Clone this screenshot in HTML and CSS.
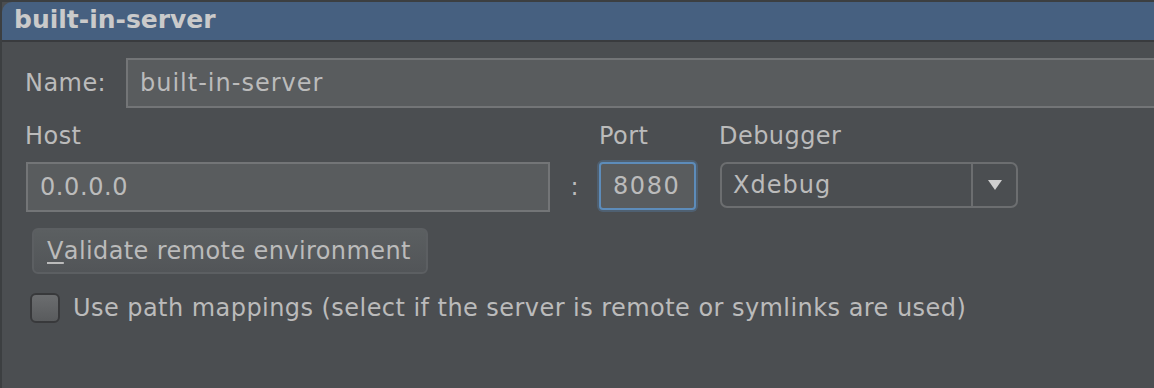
FILE: index.html
```html
<!DOCTYPE html>
<html>
<head>
<meta charset="utf-8">
<link rel="stylesheet" href="styles.css">
</head>
<body>
<div class="window">
  <div class="titlebar">built-in-server</div>
  <div class="content">
    <div class="name-row">
      <span class="label name-label">Name:</span>
      <div class="field name-field">built-in-server</div>
    </div>
    <div class="conn-grid">
      <span class="label">Host</span>
      <span></span>
      <span class="label">Port</span>
      <span class="label debugger-label">Debugger</span>
      <div class="field host-field">0.0.0.0</div>
      <span class="colon">:</span>
      <div class="field port-field">8080</div>
      <div class="combo">
        <span class="combo-value">Xdebug</span>
        <span class="combo-arrow"><svg width="14" height="10" viewBox="0 0 14 10"><path d="M0 0H14L7 10Z" fill="#cfcfcf"/></svg></span>
      </div>
    </div>
    <div class="button-row">
      <div class="button"><span class="mnemonic">V</span>alidate remote environment</div>
    </div>
    <div class="check-row">
      <span class="checkbox"></span>
      <span class="label">Use path mappings (select if the server is remote or symlinks are used)</span>
    </div>
  </div>
</div>
</body>
</html>
```
FILE: styles.css
```css
html, body {
  margin: 0;
  padding: 0;
  background: #3c3f41;
  width: 1154px;
  height: 388px;
  overflow: hidden;
}
body {
  font-family: "DejaVu Sans", sans-serif;
  color: #bbbbbb;
}
.window {
  margin: 2px 0 0 2px;
  height: 386px;
  background: #4b4e51;
  display: flex;
  flex-direction: column;
}
.titlebar {
  background: #466080;
  border-top-left-radius: 10px;
  border-bottom: 2px solid #393b3e;
  box-sizing: border-box;
  height: 40px;
  padding-left: 12px;
  font-weight: bold;
  font-size: 25px;
  line-height: 36px;
  color: #cacaca;
}
.content {
  padding: 16px 0 0 23px;
  display: flex;
  flex-direction: column;
}
.label {
  font-size: 24px;
  letter-spacing: 0.45px;
  line-height: 28px;
  white-space: nowrap;
}
.name-row {
  display: flex;
  align-items: center;
}
.name-label {
  width: 101px;
}
.field {
  box-sizing: border-box;
  background: #595c5e;
  border: 2px solid #737577;
  font-size: 24px;
  letter-spacing: 0.6px;
  display: flex;
  align-items: center;
  padding-left: 12px;
  white-space: nowrap;
}
.name-field {
  flex: 1;
  height: 50px;
  margin-right: -20px;
  letter-spacing: 1px;
}
.conn-grid {
  margin-top: 14px;
  display: grid;
  grid-template-columns: 525px 49px 97px 322px;
  row-gap: 12px;
  align-items: end;
}
.debugger-label {
  margin-left: 23px;
}
.host-field {
  height: 50px;
  margin-left: 1px;
}
.colon {
  font-size: 24px;
  text-align: center;
  align-self: center;
}
.port-field {
  height: 48px;
  align-self: start;
  border: 2px solid #5d8cba;
  border-radius: 4px;
  box-shadow: 0 0 0 2px rgba(88, 132, 176, 0.35);
  padding-left: 12px;
  letter-spacing: 1.6px;
}
.combo {
  box-sizing: border-box;
  margin-left: 24px;
  height: 46px;
  align-self: start;
  border: 2px solid #6c6e70;
  border-radius: 7px;
  display: flex;
  align-items: stretch;
}
.combo-value {
  flex: 1;
  font-size: 24px;
  letter-spacing: 1px;
  display: flex;
  align-items: center;
  padding-left: 11px;
  border-right: 2px solid #6c6e70;
}
.combo-arrow {
  width: 43px;
  display: flex;
  align-items: center;
  justify-content: center;
}
.button-row {
  margin-top: 16px;
  display: flex;
  padding-left: 7px;
}
.button {
  box-sizing: border-box;
  height: 46px;
  width: 396px;
  border: 2px solid #5c5f62;
  border-radius: 6px;
  background: linear-gradient(#5b5f61, #525558);
  font-size: 24px;
  letter-spacing: 0.4px;
  display: flex;
  align-items: center;
  padding-left: 13px;
  white-space: nowrap;
}
.mnemonic {
  text-decoration: underline;
  text-underline-offset: 3px;
}
.check-row {
  margin-top: 19px;
  display: flex;
  align-items: center;
  padding-left: 5px;
  gap: 13px;
}
.checkbox {
  box-sizing: border-box;
  width: 30px;
  height: 30px;
  border: 2px solid #38393b;
  border-radius: 6px;
  background: linear-gradient(#6b6d6f, #595b5d);
}
```
